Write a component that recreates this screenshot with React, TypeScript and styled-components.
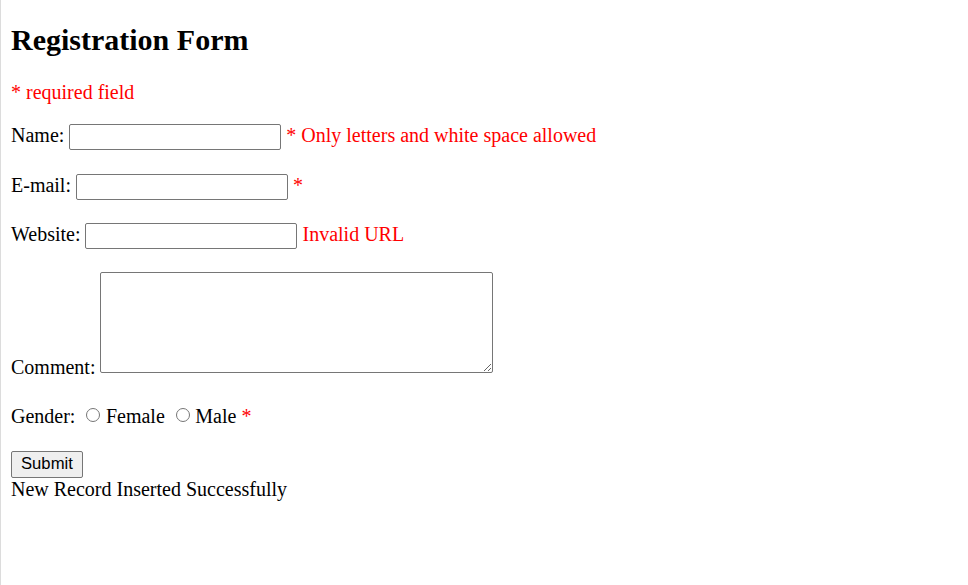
import React from "react";
import styled, { createGlobalStyle } from "styled-components";

const GlobalStyle = createGlobalStyle`
  html, body {
    margin: 0;
    padding: 0;
    background: #ffffff;
  }
  body {
    font-family: "Liberation Serif", "Times New Roman", serif;
    font-size: 20px;
    color: #000000;
  }
`;

const Page = styled.div`
  min-height: 100vh;
  box-sizing: border-box;
  border-left: 1px solid #dcdcdc;
  padding: 1px 10px 10px 10px;
`;

const Title = styled.h2`
  font-size: 30px;
  font-weight: bold;
  margin: 21.5px 0 24.5px;
`;

const Note = styled.p`
  margin: 0 0 20px;
`;

const Error = styled.span`
  color: #ff0000;
`;

const Form = styled.form`
  margin: 0;
`;

const Row = styled.div<{ $gap?: number }>`
  margin-bottom: ${(p) => (p.$gap ?? 23.5)}px;
`;

const TextInput = styled.input`
  box-sizing: border-box;
  width: 212px;
  height: 26px;
  padding: 1px 2px;
  border: 1px solid #767676;
  border-radius: 2px;
  font-family: "Liberation Sans", Arial, sans-serif;
  font-size: 16.67px;
  background: #ffffff;
  margin: 0;
`;

const TextArea = styled.textarea`
  box-sizing: border-box;
  width: 393px;
  height: 101px;
  border: 1px solid #767676;
  border-radius: 2px;
  padding: 2px;
  margin: 0 0 1px;
  font-family: "Liberation Mono", monospace;
  font-size: 16.67px;
  vertical-align: baseline;
`;

const Radio = styled.input`
  appearance: none;
  -webkit-appearance: none;
  box-sizing: border-box;
  width: 14px;
  height: 14px;
  border: 1px solid #767676;
  border-radius: 50%;
  background: #ffffff;
  margin: 0 5.5px 0 6px;
  vertical-align: baseline;
  position: relative;
  top: -1px;
`;

const SubmitButton = styled.button`
  box-sizing: border-box;
  height: 27px;
  padding: 1px 9px;
  margin: 0;
  border: 1px solid #767676;
  border-radius: 2px;
  background: #efefef;
  color: #000000;
  font-family: "Liberation Sans", Arial, sans-serif;
  font-size: 16.67px;
`;

const Message = styled.div``;

export default function App() {
  return (
    <>
      <GlobalStyle />
      <Page>
        <Title>Registration Form</Title>
        <Note>
          <Error>* required field</Error>
        </Note>
        <Form onSubmit={(e) => e.preventDefault()}>
          <Row>
            Name: <TextInput type="text" name="name" />{" "}
            <Error>* Only letters and white space allowed</Error>
          </Row>
          <Row>
            E-mail: <TextInput type="text" name="email" /> <Error>*</Error>
          </Row>
          <Row $gap={22.5}>
            Website: <TextInput type="text" name="website" />{" "}
            <Error>Invalid URL</Error>
          </Row>
          <Row $gap={26.5}>
            Comment: <TextArea name="comment" rows={5} cols={40} />
          </Row>
          <Row $gap={22.5}>
            Gender: <Radio type="radio" name="gender" value="female" />
            Female <Radio type="radio" name="gender" value="male" />
            Male <Error>*</Error>
          </Row>
          <Row $gap={0}>
            <SubmitButton type="submit">Submit</SubmitButton>
          </Row>
        </Form>
        <Message>New Record Inserted Successfully</Message>
      </Page>
    </>
  );
}
